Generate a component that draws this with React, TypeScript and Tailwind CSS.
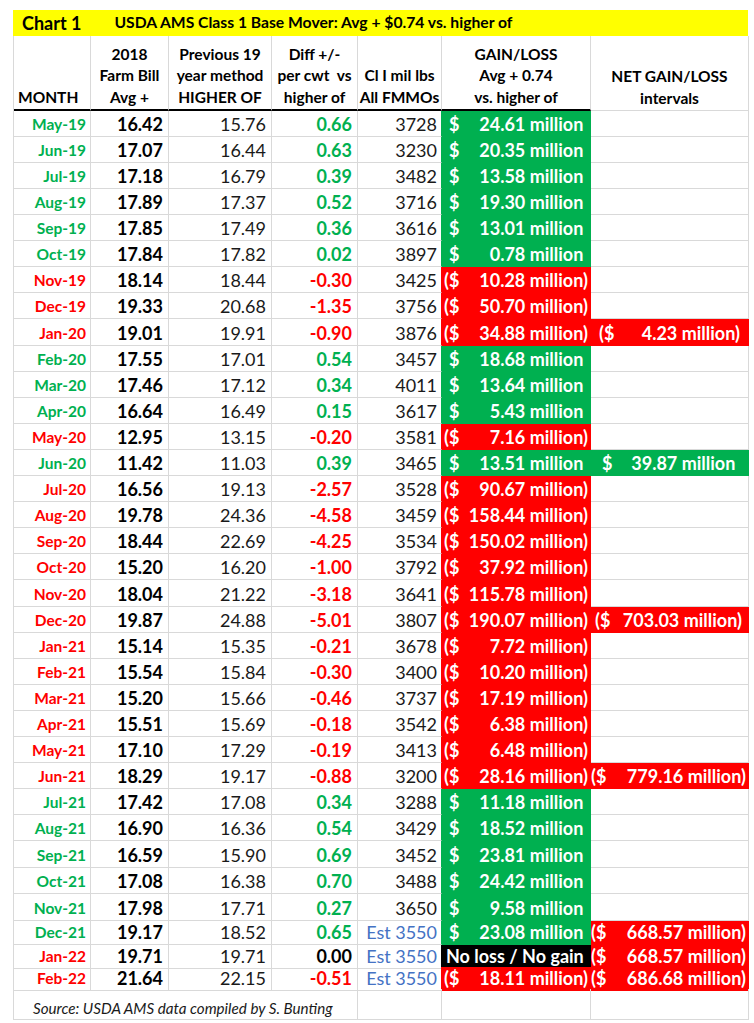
import React from "react";

const GREEN = "#00B050";
const RED = "#FF0000";

type Net = { v: number; pl: string; pr: string } | null;
type Row = {
  m: string;
  a: string;
  b: string;
  d: string;
  c: string;
  g: number | string;
  net?: Net;
};

const rows: Row[] = [
  { m: "May-19", a: "16.42", b: "15.76", d: "0.66", c: "3728", g: 24.61 },
  { m: "Jun-19", a: "17.07", b: "16.44", d: "0.63", c: "3230", g: 20.35 },
  { m: "Jul-19", a: "17.18", b: "16.79", d: "0.39", c: "3482", g: 13.58 },
  { m: "Aug-19", a: "17.89", b: "17.37", d: "0.52", c: "3716", g: 19.3 },
  { m: "Sep-19", a: "17.85", b: "17.49", d: "0.36", c: "3616", g: 13.01 },
  { m: "Oct-19", a: "17.84", b: "17.82", d: "0.02", c: "3897", g: 0.78 },
  { m: "Nov-19", a: "18.14", b: "18.44", d: "-0.30", c: "3425", g: -10.28 },
  { m: "Dec-19", a: "19.33", b: "20.68", d: "-1.35", c: "3756", g: -50.7 },
  { m: "Jan-20", a: "19.01", b: "19.91", d: "-0.90", c: "3876", g: -34.88, net: { v: -4.23, pl: "pl-[8px]", pr: "pr-[8px]" } },
  { m: "Feb-20", a: "17.55", b: "17.01", d: "0.54", c: "3457", g: 18.68 },
  { m: "Mar-20", a: "17.46", b: "17.12", d: "0.34", c: "4011", g: 13.64 },
  { m: "Apr-20", a: "16.64", b: "16.49", d: "0.15", c: "3617", g: 5.43 },
  { m: "May-20", a: "12.95", b: "13.15", d: "-0.20", c: "3581", g: -7.16 },
  { m: "Jun-20", a: "11.42", b: "11.03", d: "0.39", c: "3465", g: 13.51, net: { v: 39.87, pl: "pl-[6px]", pr: "pr-[8px]" } },
  { m: "Jul-20", a: "16.56", b: "19.13", d: "-2.57", c: "3528", g: -90.67 },
  { m: "Aug-20", a: "19.78", b: "24.36", d: "-4.58", c: "3459", g: -158.44 },
  { m: "Sep-20", a: "18.44", b: "22.69", d: "-4.25", c: "3534", g: -150.02 },
  { m: "Oct-20", a: "15.20", b: "16.20", d: "-1.00", c: "3792", g: -37.92 },
  { m: "Nov-20", a: "18.04", b: "21.22", d: "-3.18", c: "3641", g: -115.78 },
  { m: "Dec-20", a: "19.87", b: "24.88", d: "-5.01", c: "3807", g: -190.07, net: { v: -703.03, pl: "pl-[4px]", pr: "pr-[6px]" } },
  { m: "Jan-21", a: "15.14", b: "15.35", d: "-0.21", c: "3678", g: -7.72 },
  { m: "Feb-21", a: "15.54", b: "15.84", d: "-0.30", c: "3400", g: -10.2 },
  { m: "Mar-21", a: "15.20", b: "15.66", d: "-0.46", c: "3737", g: -17.19 },
  { m: "Apr-21", a: "15.51", b: "15.69", d: "-0.18", c: "3542", g: -6.38 },
  { m: "May-21", a: "17.10", b: "17.29", d: "-0.19", c: "3413", g: -6.48 },
  { m: "Jun-21", a: "18.29", b: "19.17", d: "-0.88", c: "3200", g: -28.16, net: { v: -779.16, pl: "pl-[0px]", pr: "pr-[2px]" } },
  { m: "Jul-21", a: "17.42", b: "17.08", d: "0.34", c: "3288", g: 11.18 },
  { m: "Aug-21", a: "16.90", b: "16.36", d: "0.54", c: "3429", g: 18.52 },
  { m: "Sep-21", a: "16.59", b: "15.90", d: "0.69", c: "3452", g: 23.81 },
  { m: "Oct-21", a: "17.08", b: "16.38", d: "0.70", c: "3488", g: 24.42 },
  { m: "Nov-21", a: "17.98", b: "17.71", d: "0.27", c: "3650", g: 9.58 },
  { m: "Dec-21", a: "19.17", b: "18.52", d: "0.65", c: "Est 3550", g: 23.08, net: { v: -668.57, pl: "pl-[0px]", pr: "pr-[2px]" } },
  { m: "Jan-22", a: "19.71", b: "19.71", d: "0.00", c: "Est 3550", g: "No loss / No gain", net: { v: -668.57, pl: "pl-[0px]", pr: "pr-[2px]" } },
  { m: "Feb-22", a: "21.64", b: "22.15", d: "-0.51", c: "Est 3550", g: -18.11, net: { v: -686.68, pl: "pl-[0px]", pr: "pr-[2px]" } },
];

const heights = [
  "h-[26px]", "h-[26px]", "h-[26px]", "h-[26px]", "h-[26px]", "h-[26px]", "h-[26px]", "h-[26px]", "h-[27px]", "h-[26px]",
  "h-[26px]", "h-[26px]", "h-[26px]", "h-[26px]", "h-[26px]", "h-[26px]", "h-[26px]", "h-[26px]", "h-[27px]", "h-[26px]",
  "h-[26px]", "h-[26px]", "h-[26px]", "h-[26px]", "h-[26px]", "h-[26px]", "h-[26px]", "h-[26px]", "h-[27px]", "h-[26px]",
  "h-[27px]", "h-[24px]", "h-[22px]", "h-[22px]",
];

const COLS = "grid grid-cols-[77px_78px_103px_86px_84px_149px_158px]";

function fmt(v: number) {
  return Math.abs(v).toFixed(2);
}

function Money({ v, pl, pr }: { v: number; pl: string; pr: string }) {
  const neg = v < 0;
  return (
    <div className={`flex w-full justify-between ${pl} ${pr}`}>
      <span className="whitespace-pre">
        <span className={neg ? "" : "invisible"}>(</span>$
      </span>
      <span className="whitespace-pre">
        {fmt(v)} million<span className={neg ? "" : "invisible"}>)</span>
      </span>
    </div>
  );
}

function DataRow({ r, h }: { r: Row; h: string }) {
  const d = parseFloat(r.d);
  const tone = d > 0 ? "text-[#00B050]" : d < 0 ? "text-[#FF0000]" : "text-black";
  const monthTone = d > 0 ? "text-[#00B050]" : "text-[#FF0000]";
  const gFill = typeof r.g === "string" ? "#000000" : r.g >= 0 ? GREEN : RED;
  const net = r.net;
  const netFill = net ? (net.v >= 0 ? GREEN : RED) : null;
  const cell = "flex items-end border-b border-r border-[#d9d9d9] pb-[1px] leading-[22px]";
  return (
    <div className={`${COLS} ${h}`}>
      <div className={`${cell} justify-end pr-[4px] text-[15.5px] font-bold ${monthTone}`}>{r.m}</div>
      <div className={`${cell} justify-end pr-[5px] text-[18px] font-bold text-black`}>{r.a}</div>
      <div className={`${cell} justify-end pr-[5px] text-[18px] text-[#1a1a1a]`}>{r.b}</div>
      <div className={`${cell} justify-end pr-[5px] text-[18px] font-bold ${tone}`}>{r.d}</div>
      <div
        className={`flex items-end justify-end border-b border-r border-b-[#d9d9d9] pb-[1px] pr-[4px] text-[18px] leading-[22px] ${
          r.c.startsWith("Est") ? "text-[#4472C4]" : "text-[#1a1a1a]"
        }`}
        style={{ borderRightColor: gFill }}
      >
        {r.c}
      </div>
      <div
        className="flex items-end border-b border-r pb-[1px] text-[18px] font-bold leading-[22px] text-white"
        style={{ backgroundColor: gFill, borderColor: gFill }}
      >
        {typeof r.g === "string" ? (
          <span className="whitespace-pre pl-[4px]">{r.g}</span>
        ) : (
          <Money v={r.g} pl="pl-[2px]" pr="pr-[2px]" />
        )}
      </div>
      {net && netFill ? (
        <div
          className="flex items-end border-b border-r pb-[1px] text-[18px] font-bold leading-[22px] text-white"
          style={{ backgroundColor: netFill, borderColor: netFill }}
        >
          <Money v={net.v} pl={net.pl} pr={net.pr} />
        </div>
      ) : (
        <div className="border-b border-r border-[#d9d9d9]" />
      )}
    </div>
  );
}

export default function App() {
  const head =
    "flex flex-col items-center justify-end border-r border-[#d9d9d9] text-[15.5px] font-bold leading-[21.5px] text-black pb-[1px]";
  return (
    <div className="min-h-[1023px] w-[754px] bg-white pt-[10px] font-['Lato',sans-serif]">
      <div className="ml-[13px] w-[735px]">
        <div className="flex h-[26px] items-center bg-[#FFFF00]">
          <span className="ml-[9px] text-[18px] font-bold text-black">Chart 1</span>
          <span className="ml-[33px] text-[15.7px] font-bold text-black">
            USDA AMS Class 1 Base Mover: Avg + $0.74 vs. higher of
          </span>
        </div>
        <div className="border-l border-[#d9d9d9]">
          <div className={`${COLS} h-[75px]`}>
            <div className={`${head} !items-start border-b-2 border-b-black pl-[4px]`}>
              <span>MONTH</span>
            </div>
            <div className={`${head} border-b-2 border-b-black`}>
              <span>2018</span>
              <span>Farm Bill</span>
              <span>Avg +</span>
            </div>
            <div className={`${head} border-b-2 border-b-black`}>
              <span>Previous 19</span>
              <span>year method</span>
              <span>HIGHER OF</span>
            </div>
            <div className={`${head} border-b-2 border-b-black`}>
              <span>Diff +/-</span>
              <span className="whitespace-pre">per cwt  vs</span>
              <span>higher of</span>
            </div>
            <div className={`${head} border-b-2 border-b-black`}>
              <span>Cl I mil lbs</span>
              <span>All FMMOs</span>
            </div>
            <div className={`${head} border-b-2 border-b-black`}>
              <span>GAIN/LOSS</span>
              <span>Avg + 0.74</span>
              <span>vs. higher of</span>
            </div>
            <div className={`${head} border-b border-b-[#d9d9d9]`}>
              <span>NET GAIN/LOSS</span>
              <span>intervals</span>
            </div>
          </div>
          {rows.map((r, i) => (
            <DataRow key={r.m} r={r} h={heights[i]} />
          ))}
          <div className={`${COLS} h-[31px]`}>
            <div className="col-span-4 flex items-end border-b border-r border-[#d9d9d9] pb-[1px] pl-[19px] text-[15.2px] italic leading-[20px] text-[#1a1a1a]">
              Source: USDA AMS data compiled by S. Bunting
            </div>
            <div className="border-b border-r border-[#d9d9d9]" />
            <div className="border-b border-r border-[#d9d9d9]" />
            <div className="border-b border-r border-[#d9d9d9]" />
          </div>
        </div>
      </div>
    </div>
  );
}
